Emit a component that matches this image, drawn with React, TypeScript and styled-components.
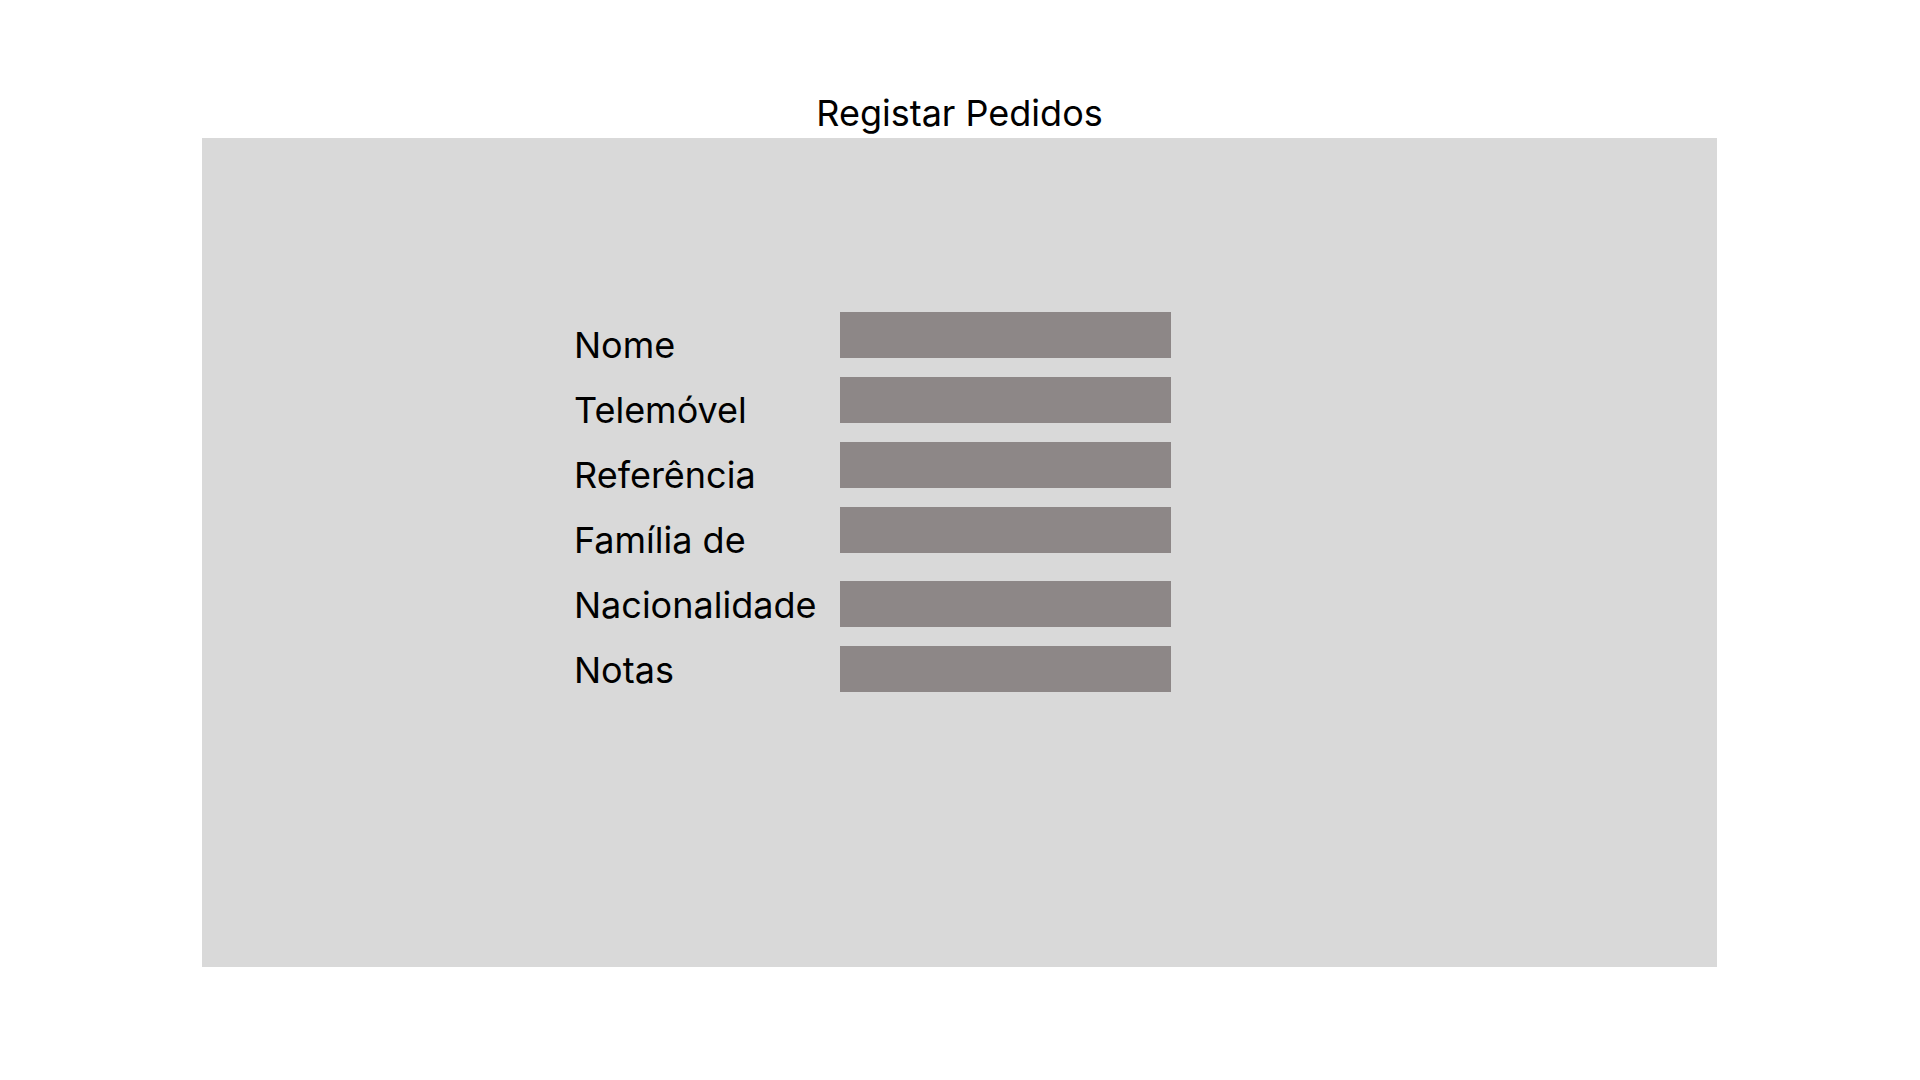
import React from "react";
import styled, { createGlobalStyle } from "styled-components";

const GlobalStyle = createGlobalStyle`
  *, *::before, *::after {
    box-sizing: border-box;
  }

  body {
    margin: 0;
    background: #ffffff;
    color: #000000;
    font-family: Inter, "Liberation Sans", sans-serif;
    font-size: 36px;
    line-height: 50px;
  }
`;

const Page = styled.main`
  padding: 88px 203px 88px 202px;
`;

const Title = styled.h1`
  margin: 0;
  font-size: 36px;
  font-weight: 400;
  line-height: 50px;
  text-align: center;
`;

const Panel = styled.form`
  display: grid;
  grid-template-columns: 266px minmax(0, 331px);
  align-items: start;
  padding: 174px 24px 272px 372px;
  background: #d9d9d9;
`;

const Labels = styled.div`
  display: flex;
  flex-direction: column;
  align-items: flex-start;
  gap: 15px;
  padding-top: 8px;
`;

const Label = styled.label`
  white-space: nowrap;
`;

const Fields = styled.div`
  display: flex;
  flex-direction: column;
  gap: 28px;
`;

const FieldGroup = styled.div`
  display: flex;
  flex-direction: column;
  gap: 19px;
`;

const Input = styled.input`
  width: 100%;
  height: 46px;
  padding: 0 12px;
  border: 0;
  border-radius: 0;
  background: #8d8787;
  color: #000000;
  font: inherit;
  font-size: 24px;
`;

type Field = { id: string; label: string; type: string };

const groups: Field[][] = [
  [
    { id: "nome", label: "Nome", type: "text" },
    { id: "telemovel", label: "Telemóvel", type: "tel" },
    { id: "referencia", label: "Referência", type: "text" },
    { id: "familia", label: "Família de", type: "text" },
  ],
  [
    { id: "nacionalidade", label: "Nacionalidade", type: "text" },
    { id: "notas", label: "Notas", type: "text" },
  ],
];

export default function App() {
  return (
    <>
      <GlobalStyle />
      <Page>
        <Title>Registar Pedidos</Title>
        <Panel>
          <Labels>
            {groups.flat().map((field) => (
              <Label key={field.id} htmlFor={field.id}>
                {field.label}
              </Label>
            ))}
          </Labels>
          <Fields>
            {groups.map((group) => (
              <FieldGroup key={group[0].id}>
                {group.map((field) => (
                  <Input key={field.id} id={field.id} name={field.id} type={field.type} />
                ))}
              </FieldGroup>
            ))}
          </Fields>
        </Panel>
      </Page>
    </>
  );
}
